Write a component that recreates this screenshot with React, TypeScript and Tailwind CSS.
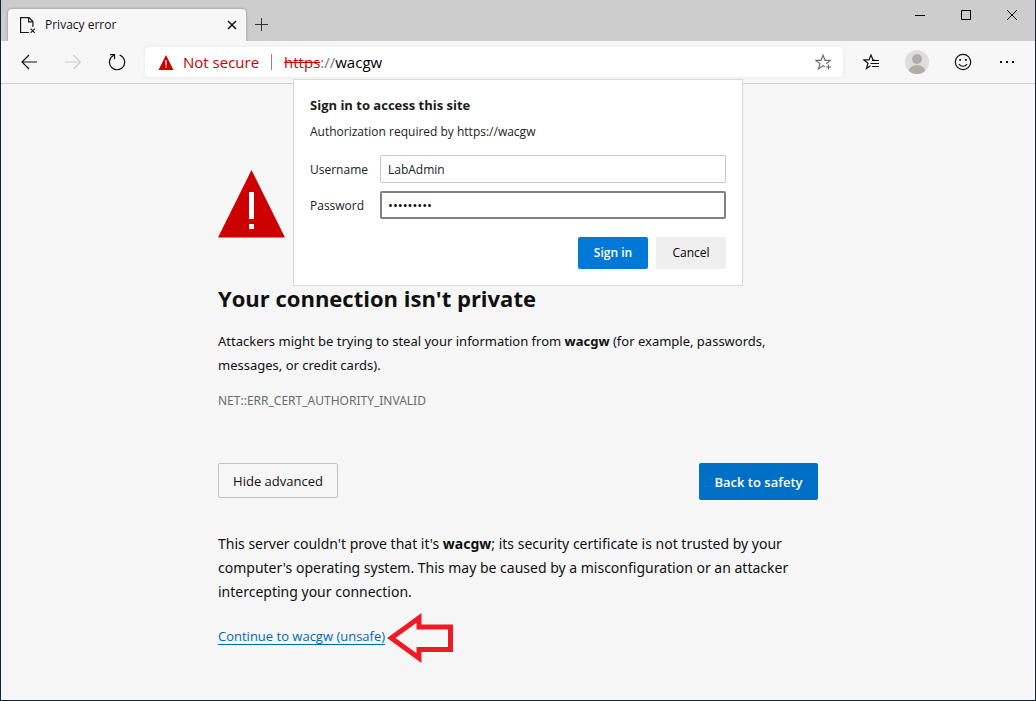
import React from "react";

function PageIcon() {
  return (
    <svg width="16" height="17" viewBox="0 0 16 17" fill="none" stroke="#1a1a1a" strokeWidth="1.2" aria-hidden="true">
      <path d="M9 15.5H0.600V0.600H9l3.900 3.900v5.500" />
      <path d="M8.600 0.900v4h4" />
      <path d="M10.600 11.600l4.200 4.200M14.800 11.600l-4.200 4.200" strokeWidth="1.1" />
    </svg>
  );
}

function WarningIcon({ className }: { className: string }) {
  return (
    <svg className={className} viewBox="0 0 68 68" aria-hidden="true">
      <path d="M33.500 0L67 67.500H0z" fill="#cc0000" />
      <path d="M31 22h5v27h-5zM31 54h5v5h-5z" fill="#fff" />
    </svg>
  );
}

function SmallWarningIcon() {
  return (
    <svg width="16" height="15" viewBox="0 0 16 15" aria-hidden="true">
      <path d="M8 0L15.500 15H0.500z" fill="#cc0000" />
      <path d="M7.400 5h1.200v5.500H7.400zM7.400 11.500h1.200v1.300H7.400z" fill="#fff" />
    </svg>
  );
}

function TitleBar() {
  return (
    <header className="flex h-[41px] items-end bg-[#cdcdcd] pl-[7px]">
      <div className="flex h-8 w-[238px] items-center rounded-t-[4px] bg-[#f7f7f7] pl-3 pr-1.5 shadow-[0_0_3px_rgba(0,0,0,0.35)] [clip-path:inset(-4px_-4px_0_-4px)]">
        <PageIcon />
        <span className="ml-[9px] flex-1 text-xs text-[#111]">Privacy error</span>
        <button aria-label="Close tab" className="flex size-4 items-center justify-center">
          <svg width="10" height="10" viewBox="0 0 10 10" stroke="#111" strokeWidth="1.500" aria-hidden="true">
            <path d="M1 1l8 8M9 1l-8 8" />
          </svg>
        </button>
      </div>
      <button aria-label="New tab" className="flex h-8 w-[31px] items-center justify-center pb-0.5">
        <svg width="13" height="13" viewBox="0 0 13 13" stroke="#333" aria-hidden="true">
          <path d="M6.500 0v13M0 6.500h13" />
        </svg>
      </button>
      <div className="ml-auto flex h-[30px] self-start">
        <button aria-label="Minimize" className="flex w-[46px] items-center justify-center">
          <svg width="10" height="10" viewBox="0 0 10 10" stroke="#000" aria-hidden="true"><path d="M0 5.500h10" /></svg>
        </button>
        <button aria-label="Maximize" className="flex w-[46px] items-center justify-center">
          <svg width="10" height="10" viewBox="0 0 10 10" stroke="#000" fill="none" aria-hidden="true"><path d="M.5.5h9v9h-9z" /></svg>
        </button>
        <button aria-label="Close window" className="flex w-[46px] items-center justify-center">
          <svg width="10" height="10" viewBox="0 0 10 10" stroke="#000" aria-hidden="true"><path d="M0 0l10 10M10 0L0 10" /></svg>
        </button>
      </div>
    </header>
  );
}

function ToolBar() {
  return (
    <nav className="flex h-[43px] items-center border-b border-[#cfcfcf] bg-[#f7f7f7] pl-5 pr-[21px]">
      <button aria-label="Back">
        <svg width="17" height="16" viewBox="0 0 17 16" fill="none" stroke="#111" strokeWidth="1.200" aria-hidden="true">
          <path d="M16 8H1M8 1L1 8l7 7" />
        </svg>
      </button>
      <button aria-label="Forward" className="ml-[27px]" disabled>
        <svg width="17" height="16" viewBox="0 0 17 16" fill="none" stroke="#cfcfcf" strokeWidth="1.200" aria-hidden="true">
          <path d="M0 8h15.500M8.500 1l7 7-7 7" />
        </svg>
      </button>
      <button aria-label="Refresh" className="ml-[26px]">
        <svg width="18" height="18" viewBox="0 0 18 18" fill="none" stroke="#111" strokeWidth="1.200" aria-hidden="true">
          <path d="M11.600 2a7.600 7.600 0 1 1-5.800.300" />
          <path d="M2 1.700h4.500v4.500" />
        </svg>
      </button>
      <div className="ml-[19px] flex h-[30px] flex-1 items-center rounded-[4px] bg-white pl-[13px] pr-[11px] text-[15px] shadow-[0_0_4px_rgba(0,0,0,0.07)]">
        <SmallWarningIcon />
        <span className="ml-[9px] whitespace-nowrap text-[#c80000]">Not secure</span>
        <span className="mx-3 h-4 w-px bg-[#8a8a8a]" />
        <span className="flex-1 whitespace-nowrap text-black">
          <span className="text-[#c80000] line-through">https</span>
          <span className="text-[#767676]">://</span>wacgw
        </span>
        <button aria-label="Add to favorites">
          <svg width="17" height="17" viewBox="0 0 17 17" fill="none" stroke="#6b6b6b" strokeWidth="1.100" aria-hidden="true">
            <path d="M11.200 9.700L15.300 6.400H10L8 1 6 6.400H.9L5 9.600 3.400 14.800 8 11.700l1.800 1.200" />
            <path d="M13.500 10.500v5M11 13h5" />
          </svg>
        </button>
      </div>
      <button aria-label="Favorites" className="ml-5">
        <svg width="17" height="17" viewBox="0 0 17 17" fill="none" stroke="#111" strokeWidth="1.200" aria-hidden="true">
          <path d="M11.500 5.900H10L8 1 6 5.900H.9L5 9.200 3.400 14.600 7.500 11.800" />
          <path d="M9 6.500h7M7.500 9.500H16M9 12.500h7" />
        </svg>
      </button>
      <button aria-label="Profile" className="ml-[25px]">
        <svg width="24" height="24" viewBox="0 0 24 24" aria-hidden="true">
          <defs><clipPath id="avatar"><circle cx="12" cy="12" r="12" /></clipPath></defs>
          <circle cx="12" cy="12" r="12" fill="#dedede" />
          <g fill="#b1aea9" clipPath="url(#avatar)">
            <circle cx="12" cy="9" r="5" />
            <ellipse cx="12" cy="22" rx="8.500" ry="7" />
          </g>
        </svg>
      </button>
      <button aria-label="Send feedback" className="ml-[25px]">
        <svg width="18" height="18" viewBox="0 0 18 18" fill="none" stroke="#111" strokeWidth="1.200" aria-hidden="true">
          <circle cx="9" cy="9" r="7.700" />
          <path d="M5 11c1.600 3 6.400 3 8 0" />
          <path d="M5.200 6h1.800v1.800H5.200zM11 6h1.800v1.800H11z" fill="#111" stroke="none" />
        </svg>
      </button>
      <button aria-label="Settings and more" className="ml-7">
        <svg width="14" height="4" viewBox="0 0 14 4" fill="#111" aria-hidden="true">
          <path d="M0 1h2v2H0zM6 1h2v2H6zM12 1h2v2h-2z" />
        </svg>
      </button>
    </nav>
  );
}

function SignInDialog() {
  return (
    <form
      role="dialog"
      aria-labelledby="signin-title"
      onSubmit={(e) => e.preventDefault()}
      className="absolute left-1/2 top-[-5px] w-[450px] -translate-x-1/2 border border-[#d9d9d9] bg-white p-4 text-xs text-[#222]"
    >
      <h2 id="signin-title" className="text-[13px] font-bold leading-[18px] text-[#1b1b1b]">Sign in to access this site</h2>
      <p className="mt-2 leading-5">Authorization required by https://wacgw</p>
      <div className="mt-[13px] grid grid-cols-[70px_1fr] items-center gap-y-2">
        <label htmlFor="username" className="pt-0.5">Username</label>
        <input id="username" type="text" defaultValue="LabAdmin" className="h-7 rounded-[2px] border border-[#c6c6c6] px-[7px] outline-none" />
        <label htmlFor="password" className="pt-0.5">Password</label>
        <input id="password" type="password" defaultValue="lab-admin" className="h-7 rounded-[2px] border-2 border-[#808080] px-1.5 text-[13px] text-black outline-none" />
      </div>
      <div className="mt-[18px] flex justify-end gap-2">
        <button type="submit" className="h-8 w-[70px] rounded-[2px] bg-[#0078d7] font-semibold text-white">Sign in</button>
        <button type="button" className="h-8 w-[70px] rounded-[2px] bg-[#efefef] font-medium text-black">Cancel</button>
      </div>
    </form>
  );
}

export default function App() {
  return (
    <div className="flex min-h-screen flex-col border-x border-b border-[#14213a] bg-[#f6f6f6] font-['Open_Sans','Noto_Sans',sans-serif] text-[#101010]">
      <TitleBar />
      <ToolBar />
      <div className="relative flex-1">
        <main className="mx-auto max-w-[600px] pb-8 pt-[86px]">
          <WarningIcon className="size-[68px]" />
          <h1 className="mt-11 text-[22px] font-bold leading-8">Your connection isn't private</h1>
          <p className="mt-[15px] font-['Noto_Sans','Open_Sans',sans-serif] text-[13px] leading-6">
            Attackers might be trying to steal your information from <strong>wacgw</strong> (for example, passwords, messages, or credit cards).
          </p>
          <p className="mt-3 font-['Noto_Sans','Open_Sans',sans-serif] text-xs leading-6 text-[#6b6b6b]">NET::ERR_CERT_AUTHORITY_INVALID</p>
          <div className="mt-[50px] flex items-start justify-between">
            <button className="h-[35px] w-[120px] rounded-[2px] border border-[#c2c2c2] pt-0.5 text-[13px]">Hide advanced</button>
            <button className="h-[37px] w-[119px] rounded-[2px] bg-[#0070c6] pt-0.5 text-[13px] font-semibold text-white">Back to safety</button>
          </div>
          <p className="mt-8 font-['Noto_Sans','Open_Sans',sans-serif] text-sm leading-6">
            This server couldn't prove that it's <strong>wacgw</strong>; its security certificate is not trusted by your computer's operating system. This may be caused by a misconfiguration or an attacker intercepting your connection.
          </p>
          <div className="mt-2 flex items-start gap-0.5">
            <a href="#continue" className="mt-4 border-b border-[#0067b8] text-[13px] leading-4 text-[#0067b8]">Continue to wacgw (unsafe)</a>
            <svg className="mt-px" width="67" height="50" viewBox="0 0 67 50" fill="none" stroke="#ed1c24" strokeWidth="5" aria-hidden="true">
              <path d="M4.300 25L32 5V14H63.500V36.500H32V45z" />
            </svg>
          </div>
        </main>
        <SignInDialog />
      </div>
    </div>
  );
}
